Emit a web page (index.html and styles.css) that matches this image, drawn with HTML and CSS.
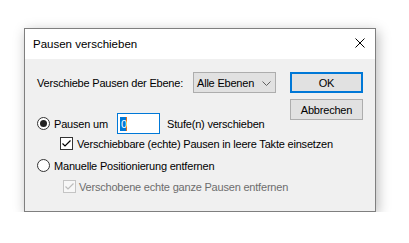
FILE: index.html
```html
<!DOCTYPE html>
<html lang="de">
<head>
<meta charset="utf-8">
<link rel="stylesheet" href="styles.css">
</head>
<body>
<div class="dialog">
  <div class="titlebar">
    <span class="title">Pausen verschieben</span>
    <svg class="close" width="10" height="10" viewBox="0 0 10 10"><path d="M0.5 0.5 L9.5 9.5 M9.5 0.5 L0.5 9.5" stroke="#000" stroke-width="1" fill="none"/></svg>
  </div>
  <div class="content">
    <div class="left">
      <div class="row row1">
        <span class="label">Verschiebe Pausen der Ebene:</span>
        <div class="combo">
          <span>Alle Ebenen</span>
          <svg class="chev" width="9" height="5" viewBox="0 0 9 5"><path d="M0.5 0.5 L4.5 4.5 L8.5 0.5" stroke="#606060" stroke-width="1" fill="none"/></svg>
        </div>
      </div>
      <div class="row row2">
        <span class="radio on"></span>
        <span class="rlabel">Pausen um</span>
        <div class="edit"><span class="sel">0</span></div>
        <span class="after">Stufe(n) verschieben</span>
      </div>
      <div class="row row3">
        <span class="check">
          <svg width="11" height="11" viewBox="0 0 11 11"><path d="M1.5 5.5 L4 8 L9.5 2.5" stroke="#000" stroke-width="1.2" fill="none"/></svg>
        </span>
        <span class="clabel">Verschiebbare (echte) Pausen in leere Takte einsetzen</span>
      </div>
      <div class="row row4">
        <span class="radio"></span>
        <span class="rlabel2">Manuelle Positionierung entfernen</span>
      </div>
      <div class="row row5">
        <span class="check disabled">
          <svg width="11" height="11" viewBox="0 0 11 11"><path d="M1.5 5.5 L4 8 L9.5 2.5" stroke="#bcbcbc" stroke-width="1.2" fill="none"/></svg>
        </span>
        <span class="clabel dis">Verschobene echte ganze Pausen entfernen</span>
      </div>
    </div>
    <div class="right">
      <div class="btn default">OK</div>
      <div class="btn">Abbrechen</div>
    </div>
  </div>
</div>
</body>
</html>
```
FILE: styles.css
```css
html, body {
  margin: 0;
  padding: 0;
  background: #ffffff;
}
body {
  padding: 28px 0 0 24px;
  font-family: "Liberation Sans", Arial, sans-serif;
  font-size: 11px;
  letter-spacing: -0.2px;
  color: #000;
}
.dialog {
  width: 352px;
  height: 184px;
  box-sizing: border-box;
  border: 1px solid #7f7f7f;
  background: #f0f0f0;
  box-shadow: 2px 3px 12px rgba(0,0,0,0.28);
  display: flex;
  flex-direction: column;
}
.titlebar {
  height: 30px;
  background: #ffffff;
  display: flex;
  align-items: center;
  justify-content: space-between;
  padding: 0 10px 0 8px;
}
.title {
  font-size: 11.5px;
  letter-spacing: 0;
}
.close {
  display: block;
  margin-top: -2px;
}
.content {
  flex: 1;
  display: flex;
  padding: 13px 12px 0 12px;
}
.left {
  flex: 1;
  min-width: 0;
  display: flex;
  flex-direction: column;
}
.right {
  width: 73px;
  flex: none;
  display: flex;
  flex-direction: column;
  gap: 6px;
}
.row {
  display: flex;
  align-items: center;
  white-space: nowrap;
}
.row1 { height: 21px; }
.row2 { height: 21px; margin-top: 20px; }
.row3 { height: 13px; margin-top: 3px; padding-left: 23px; }
.row4 { height: 13px; margin-top: 9px; }
.row5 { height: 13px; margin-top: 8px; padding-left: 26px; }
.label {
  width: 156px;
  flex: none;
}
.combo {
  width: 83px;
  height: 21px;
  flex: none;
  box-sizing: border-box;
  border: 1px solid #adadad;
  background: #e1e1e1;
  display: flex;
  align-items: center;
  justify-content: space-between;
  padding: 0 4px 0 3px;
}
.chev { display: block; margin-top: 1px; }
.radio {
  width: 13px;
  height: 13px;
  box-sizing: border-box;
  border: 1px solid #333;
  border-radius: 50%;
  background: #fff;
  position: relative;
  flex: none;
}
.radio.on::after {
  content: "";
  position: absolute;
  left: 2px;
  top: 2px;
  width: 7px;
  height: 7px;
  border-radius: 50%;
  background: #222;
}
.rlabel {
  margin-left: 4px;
  width: 63px;
  flex: none;
}
.rlabel2 {
  margin-left: 4px;
  flex: none;
}
.edit {
  width: 43px;
  height: 21px;
  flex: none;
  box-sizing: border-box;
  border: 1px solid #0078d7;
  background: #fff;
  display: flex;
  align-items: center;
  padding-left: 2px;
}
.sel {
  background: #0078d7;
  color: #fff;
  height: 14px;
  line-height: 14px;
  padding: 0 0 0 1px;
  border-right: 1px solid #e07020;
  width: 5px;
}
.after {
  margin-left: 7px;
  flex: none;
}
.check {
  width: 13px;
  height: 13px;
  box-sizing: border-box;
  border: 1px solid #333;
  background: #fff;
  flex: none;
  display: flex;
  align-items: center;
  justify-content: center;
}
.check svg { display: block; }
.check.disabled {
  border-color: #c4c4c4;
  background: #f7f7f7;
}
.clabel {
  margin-left: 4px;
  flex: none;
}
.clabel.dis {
  margin-left: 3px;
  color: #6d6d6d;
}
.btn {
  height: 21px;
  box-sizing: border-box;
  border: 1px solid #adadad;
  background: #e1e1e1;
  display: flex;
  align-items: center;
  justify-content: center;
}
.btn.default {
  border: 2px solid #0078d7;
}
```
